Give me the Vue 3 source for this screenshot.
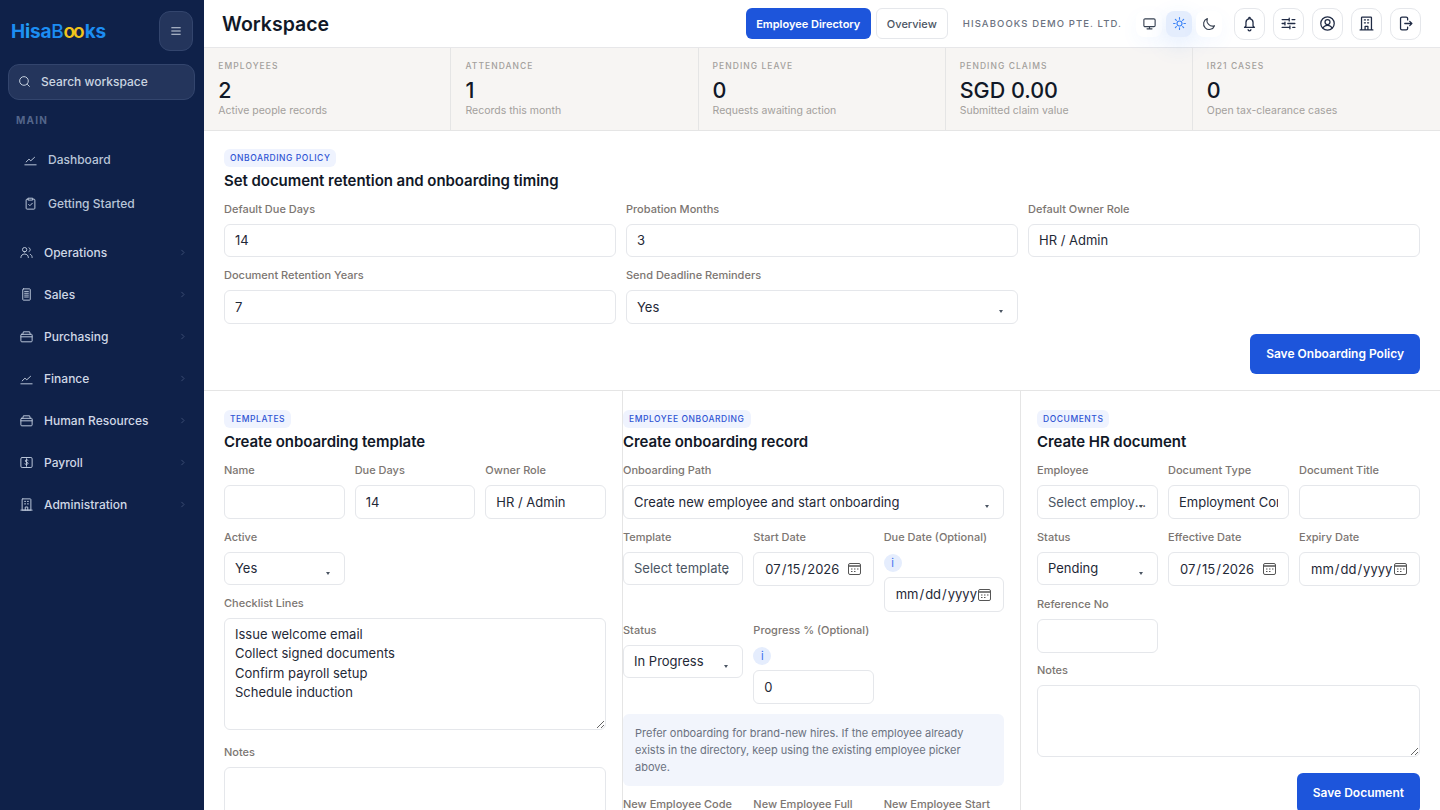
<template>
  <div class="app">
    <aside class="sidebar">
      <div class="brand">
        <span class="logo">H<span class="logo-i">i</span>sa<span class="logo-b">B</span><span class="logo-oo">oo</span>ks</span>
        <button class="menu-btn" aria-label="Menu">
          <svg viewBox="0 0 24 24" class="ico-menu"><path d="M4 6.5h16M4 12h16M4 17.5h16" /></svg>
        </button>
      </div>
      <div class="search">
        <svg viewBox="0 0 24 24" class="ico-search"><circle cx="11" cy="11" r="8" /><path d="m17 17 4.5 4.5" /></svg>
        <span>Search workspace</span>
      </div>
      <div class="nav-title">MAIN</div>
      <a v-for="item in mainLinks" :key="item.label" class="nav-sub">
        <svg viewBox="0 0 24 24" class="nav-ico"><path :d="icons[item.icon]" /></svg>
        <span>{{ item.label }}</span>
      </a>
      <nav class="nav-groups">
        <a v-for="item in groups" :key="item.label" class="nav-group">
          <svg viewBox="0 0 24 24" class="nav-ico"><path :d="icons[item.icon]" /></svg>
          <span class="nav-label">{{ item.label }}</span>
          <svg viewBox="0 0 24 24" class="chevron"><path d="m9 5 7 7-7 7" /></svg>
        </a>
      </nav>
    </aside>

    <main class="main">
      <header class="topbar">
        <h1>Workspace</h1>
        <div class="top-actions">
          <button class="btn-top primary">Employee Directory</button>
          <button class="btn-top">Overview</button>
          <span class="company">HISABOOKS DEMO PTE. LTD.</span>
          <div class="themes">
            <button v-for="t in themes" :key="t.icon" class="theme-btn" :class="{ active: t.active }">
              <svg viewBox="0 0 24 24"><path :d="icons[t.icon]" /></svg>
            </button>
          </div>
          <div class="tools">
            <button v-for="t in tools" :key="t" class="tool-btn">
              <svg viewBox="0 0 24 24"><path :d="icons[t]" /></svg>
            </button>
          </div>
        </div>
      </header>

      <section class="stats">
        <div v-for="s in stats" :key="s.label" class="stat">
          <div class="stat-label">{{ s.label }}</div>
          <div class="stat-value">{{ s.value }}</div>
          <div class="stat-sub">{{ s.sub }}</div>
        </div>
      </section>

      <section class="policy">
        <span class="tag">ONBOARDING POLICY</span>
        <h2>Set document retention and onboarding timing</h2>
        <div class="grid3">
          <label class="field"><span>Default Due Days</span><input value="14" /></label>
          <label class="field"><span>Probation Months</span><input value="3" /></label>
          <label class="field"><span>Default Owner Role</span><input value="HR / Admin" /></label>
          <label class="field"><span>Document Retention Years</span><input value="7" /></label>
          <label class="field">
            <span>Send Deadline Reminders</span>
            <div class="sel"><select><option>Yes</option></select></div>
          </label>
        </div>
        <div class="actions"><button class="btn-save wide">Save Onboarding Policy</button></div>
      </section>

      <section class="columns">
        <div class="col col-a">
          <span class="tag">TEMPLATES</span>
          <h2>Create onboarding template</h2>
          <div class="grid3">
            <label class="field"><span>Name</span><input /></label>
            <label class="field"><span>Due Days</span><input value="14" /></label>
            <label class="field"><span>Owner Role</span><input value="HR / Admin" /></label>
            <label class="field">
              <span>Active</span>
              <div class="sel"><select><option>Yes</option></select></div>
            </label>
          </div>
          <label class="field block">
            <span>Checklist Lines</span>
            <textarea class="ta-lines" :value="checklist"></textarea>
          </label>
          <label class="field block notes-a">
            <span>Notes</span>
            <textarea class="ta-notes"></textarea>
          </label>
        </div>

        <div class="col col-b">
          <span class="tag">EMPLOYEE ONBOARDING</span>
          <h2>Create onboarding record</h2>
          <label class="field block path">
            <span>Onboarding Path</span>
            <div class="sel"><select><option>Create new employee and start onboarding</option></select></div>
          </label>
          <div class="grid3">
            <label class="field">
              <span>Template</span>
              <div class="sel"><select class="muted"><option>Select template</option></select></div>
            </label>
            <label class="field"><span>Start Date</span><input type="date" value="2026-07-15" /></label>
            <label class="field">
              <span>Due Date (Optional)</span>
              <i class="hint">i</i>
              <input type="date" />
            </label>
            <label class="field">
              <span>Status</span>
              <div class="sel"><select><option>In Progress</option></select></div>
            </label>
            <label class="field">
              <span>Progress % (Optional)</span>
              <i class="hint">i</i>
              <input value="0" />
            </label>
          </div>
          <p class="notice">Prefer onboarding for brand-new hires. If the employee already exists in the directory, keep using the existing employee picker above.</p>
          <div class="grid3">
            <label class="field"><span>New Employee Code</span><input /></label>
            <label class="field"><span>New Employee Full Name</span><input /></label>
            <label class="field"><span>New Employee Start Date</span><input type="date" /></label>
          </div>
        </div>

        <div class="col col-c">
          <span class="tag">DOCUMENTS</span>
          <h2>Create HR document</h2>
          <div class="grid3">
            <label class="field">
              <span>Employee</span>
              <div class="sel"><select class="muted"><option>Select employee</option></select></div>
            </label>
            <label class="field"><span>Document Type</span><input value="Employment Contract" /></label>
            <label class="field"><span>Document Title</span><input /></label>
            <label class="field">
              <span>Status</span>
              <div class="sel"><select><option>Pending</option></select></div>
            </label>
            <label class="field"><span>Effective Date</span><input type="date" value="2026-07-15" /></label>
            <label class="field"><span>Expiry Date</span><input type="date" /></label>
            <label class="field"><span>Reference No</span><input /></label>
          </div>
          <label class="field block notes-c">
            <span>Notes</span>
            <textarea class="ta-doc"></textarea>
          </label>
          <div class="actions doc"><button class="btn-save">Save Document</button></div>
        </div>
      </section>
    </main>
  </div>
</template>

<script setup>
const icons = {
  chart: 'M3 20.5h18M5 16l4.5-4.5 3 2.5 6-5.5',
  clipboard: 'M8.5 5H6.5A1.5 1.5 0 0 0 5 6.5v13A1.5 1.5 0 0 0 6.5 21h11a1.5 1.5 0 0 0 1.5-1.5v-13A1.5 1.5 0 0 0 17.5 5h-2M8.5 3.5h7v3h-7zM9 13.5l2 2 4-4',
  people: 'M9 11a3.5 3.5 0 1 0 0-7 3.5 3.5 0 0 0 0 7zM3 20c0-3.5 2.5-5.5 6-5.5s6 2 6 5.5M16 4.5a3.3 3.3 0 0 1 2 3c0 1.4-.8 2.5-2 3M18 15c2 .6 3 2.4 3 5',
  doc: 'M7 3h10a1 1 0 0 1 1 1v16a1 1 0 0 1-1 1H7a1 1 0 0 1-1-1V4a1 1 0 0 1 1-1zM9 7h6M9 10h6M9 13h6M9 16h6',
  box: 'M4 8.5h16a1 1 0 0 1 1 1V19a1.5 1.5 0 0 1-1.5 1.5h-15A1.5 1.5 0 0 1 3 19V9.5a1 1 0 0 1 1-1zM6 8.5 7 4.5h10l1 4M3 12.5h18',
  payroll: 'M5 4h14a2 2 0 0 1 2 2v12a2 2 0 0 1-2 2H5a2 2 0 0 1-2-2V6a2 2 0 0 1 2-2zM14.5 8.5c-1-1.2-4.5-1.2-4.5 1 0 2.2 4.5 1.6 4.5 3.8 0 2-3.3 2.2-5 1M12 6v12',
  building: 'M6 3h12a1 1 0 0 1 1 1v17H5V4a1 1 0 0 1 1-1zM3 21h18M9 7h1.5M13.5 7H15M9 11h1.5M13.5 11H15M10 21v-5h4v5',
  monitor: 'M5 4.5h14A2 2 0 0 1 21 6.5V15a2 2 0 0 1-2 2H5a2 2 0 0 1-2-2V6.5a2 2 0 0 1 2-2zM8 20.5h8M12 17v3.5',
  sun: 'M12 8a4 4 0 1 0 0 8 4 4 0 0 0 0-8zM12 2.5V5M12 19v2.5M2.5 12H5M19 12h2.5M5.3 5.3 7 7M17 17l1.7 1.7M5.3 18.7 7 17M17 7l1.7-1.7',
  moon: 'M20 15.5A9 9 0 0 1 8.5 4 9 9 0 1 0 20 15.5z',
  bell: 'M12 3.5a1 1 0 0 1 1 1v1c2.5.5 4 2.5 4 5v5l2 2H5l2-2v-5c0-2.5 1.5-4.5 4-5v-1a1 1 0 0 1 1-1zM10 20.5a2 2 0 0 0 4 0',
  sliders: 'M3 6.5h10M17 6.5h4M13 4.5v4M3 12h4M11 12h10M7 10v4M3 17.5h11M18 17.5h3M14 15.5v4',
  user: 'M12 2.5a9.5 9.5 0 1 0 0 19 9.5 9.5 0 0 0 0-19zM12 6.5a3.5 3.5 0 1 0 0 7 3.5 3.5 0 0 0 0-7zM5.5 19c1-3 3.5-4.5 6.5-4.5s5.5 1.5 6.5 4.5',
  logout: 'M15 7V5a2 2 0 0 0-2-2H7a2 2 0 0 0-2 2v14a2 2 0 0 0 2 2h6a2 2 0 0 0 2-2v-2M11 12h10M18 9l3 3-3 3',
}

const mainLinks = [
  { label: 'Dashboard', icon: 'chart' },
  { label: 'Getting Started', icon: 'clipboard' },
]

const groups = [
  { label: 'Operations', icon: 'people' },
  { label: 'Sales', icon: 'doc' },
  { label: 'Purchasing', icon: 'box' },
  { label: 'Finance', icon: 'chart' },
  { label: 'Human Resources', icon: 'box' },
  { label: 'Payroll', icon: 'payroll' },
  { label: 'Administration', icon: 'building' },
]

const themes = [
  { icon: 'monitor' },
  { icon: 'sun', active: true },
  { icon: 'moon' },
]

const tools = ['bell', 'sliders', 'user', 'building', 'logout']

const stats = [
  { label: 'EMPLOYEES', value: '2', sub: 'Active people records' },
  { label: 'ATTENDANCE', value: '1', sub: 'Records this month' },
  { label: 'PENDING LEAVE', value: '0', sub: 'Requests awaiting action' },
  { label: 'PENDING CLAIMS', value: 'SGD 0.00', sub: 'Submitted claim value' },
  { label: 'IR21 CASES', value: '0', sub: 'Open tax-clearance cases' },
]

const checklist = 'Issue welcome email\nCollect signed documents\nConfirm payroll setup\nSchedule induction'
</script>

<style>
html,
body {
  margin: 0;
  height: 100%;
  overflow: hidden;
  background: #fff;
}
</style>

<style scoped>
.app {
  display: flex;
  height: 810px;
  overflow: hidden;
  font-family: Inter, 'Noto Sans', sans-serif;
  color: #111827;
}

button,
input,
select,
textarea {
  font-family: inherit;
}

/* sidebar */
.sidebar {
  width: 204px;
  flex: none;
  background: #0f2149;
  color: #cbd5e1;
}

.brand {
  display: flex;
  align-items: center;
  justify-content: space-between;
  padding: 11px 11px 13px 11px;
}

.logo {
  font-size: 19px;
  font-weight: 700;
  letter-spacing: -0.2px;
  color: #1c8df2;
}

.logo-i {
  color: #22a0f5;
}

.logo-b {
  font-weight: 500;
}

.logo-oo {
  color: #f2c41b;
  letter-spacing: -2px;
  margin-right: 2px;
  font-weight: 600;
}

.menu-btn {
  width: 34px;
  height: 40px;
  padding: 0;
  display: flex;
  align-items: center;
  justify-content: center;
  background: #24355c;
  border: 1px solid #33456d;
  border-radius: 11px;
}

.ico-menu {
  width: 14px;
  height: 14px;
  fill: none;
  stroke: #cbd5e1;
  stroke-width: 1.8;
}

.search {
  margin: 0 9px 0 8px;
  height: 36px;
  display: flex;
  align-items: center;
  gap: 10px;
  padding: 0 9px 1px;
  background: #24355c;
  border: 1px solid #33456d;
  border-radius: 11px;
  box-sizing: border-box;
  font-size: 12px;
  font-weight: 500;
  color: #cbd5e1;
}

.ico-search {
  width: 13px;
  height: 13px;
  fill: none;
  stroke: #cbd5e1;
  stroke-width: 1.8;
}

.nav-title {
  margin: 14px 0 19.5px 16px;
  font-size: 10px;
  line-height: 13px;
  font-weight: 700;
  letter-spacing: 1.2px;
  color: #54668b;
}

.nav-sub {
  display: flex;
  align-items: center;
  gap: 10px;
  height: 44px;
  padding-left: 23px;
  font-size: 12px;
  font-weight: 500;
  color: #b9c5d8;
}

.nav-sub:first-of-type {
  margin-top: -9px;
}

.nav-ico {
  width: 15px;
  height: 15px;
  flex: none;
  fill: none;
  stroke: #b9c5d8;
  stroke-width: 1.6;
  stroke-linecap: round;
  stroke-linejoin: round;
}

.nav-groups {
  margin-top: 6px;
}

.nav-group {
  display: flex;
  align-items: center;
  gap: 10px;
  height: 42px;
  padding-left: 19px;
  padding-right: 17px;
  font-size: 12px;
  font-weight: 500;
  color: #cfd8e6;
}

.nav-label {
  flex: 1;
}

.chevron {
  width: 9px;
  height: 9px;
  fill: none;
  stroke: #44557a;
  stroke-width: 2.2;
}

/* top bar */
.main {
  flex: 1;
  min-width: 0;
  background: #fff;
}

.topbar {
  height: 47px;
  box-sizing: content-box;
  border-bottom: 1px solid #e7e7e9;
  display: flex;
  align-items: center;
  justify-content: space-between;
  padding: 0 19px 0 18px;
}

h1 {
  margin: 0;
  font-size: 19.5px;
  font-weight: 600;
  color: #111827;
}

.top-actions {
  display: flex;
  align-items: center;
}

.btn-top {
  height: 31px;
  padding: 0 10px;
  margin-right: 5px;
  font-size: 11px;
  font-weight: 500;
  color: #4b5563;
  background: #fff;
  border: 1px solid #e5e7eb;
  border-radius: 6px;
}

.btn-top.primary {
  padding: 0 10.5px;
  background: #1d55db;
  border: none;
  color: #fff;
  font-weight: 600;
}

.company {
  margin-left: 10px;
  font-size: 9.5px;
  font-weight: 500;
  letter-spacing: 1.1px;
  color: #6b7280;
  white-space: nowrap;
}

.themes {
  display: flex;
  gap: 4px;
  margin-left: 14px;
}

.theme-btn {
  width: 26px;
  height: 26px;
  padding: 0;
  display: flex;
  align-items: center;
  justify-content: center;
  background: #fff;
  border: none;
  border-radius: 8px;
  box-shadow: 0 6px 18px rgba(59, 130, 246, 0.05);
}

.theme-btn svg {
  width: 15px;
  height: 15px;
  fill: none;
  stroke: #374151;
  stroke-width: 1.8;
  stroke-linecap: round;
  stroke-linejoin: round;
}

.theme-btn.active {
  background: #e4edfd;
  box-shadow: 0 8px 22px rgba(59, 130, 246, 0.16);
}

.theme-btn.active svg {
  stroke: #3b82f6;
}

.tools {
  display: flex;
  gap: 8px;
  margin-left: 12px;
}

.tool-btn {
  width: 31px;
  height: 32px;
  padding: 0;
  display: flex;
  align-items: center;
  justify-content: center;
  background: #fff;
  border: 1px solid #e5e7eb;
  border-radius: 10px;
}

.tool-btn svg {
  width: 17px;
  height: 17px;
  fill: none;
  stroke: #1f2a44;
  stroke-width: 1.8;
  stroke-linecap: round;
  stroke-linejoin: round;
}

/* stats */
.stats {
  display: grid;
  grid-template-columns: repeat(5, 1fr);
  height: 82px;
  padding-left: 0.3px;
  background: #f7f5f3;
  border-bottom: 1px solid #e5e5e5;
}

.stat {
  position: relative;
  padding: 12px 14px 0 14px;
  border-right: 1px solid #e5e5e5;
}

.stat:last-child {
  border-right: none;
}

.stat-label {
  font-size: 8.5px;
  line-height: 12px;
  font-weight: 500;
  letter-spacing: 1.05px;
  color: #a3a09c;
}

.stat-value {
  font-size: 21.5px;
  line-height: 26px;
  margin-top: 5px;
  font-weight: 500;
  color: #111827;
}

.stat-sub {
  margin-top: 1px;
  font-size: 10.5px;
  line-height: 14px;
  color: #a3a09c;
}

/* shared form bits */
.tag {
  display: inline-block;
  height: 18px;
  line-height: 18px;
  padding: 0 6px;
  font-size: 8.5px;
  font-weight: 500;
  letter-spacing: 0.55px;
  color: #2f55d4;
  background: #eff3fe;
  border-radius: 6px;
  vertical-align: top;
}

h2 {
  margin: 2px 0 10.7px;
  font-size: 15px;
  line-height: 20px;
  font-weight: 600;
  letter-spacing: -0.05px;
  color: #111827;
}

.col h2 {
  margin-bottom: 11.5px;
}

.grid3 {
  display: grid;
  grid-template-columns: repeat(3, minmax(0, 1fr));
  gap: 11px 10px;
  align-items: start;
}

.field {
  display: block;
  min-width: 0;
}

.field > span {
  display: block;
  margin-bottom: 7px;
  font-size: 11px;
  line-height: 15px;
  font-weight: 500;
  color: #7c7672;
}

input,
select,
textarea {
  display: block;
  width: 100%;
  box-sizing: border-box;
  height: 33.5px;
  padding: 0 10px;
  font-size: 13px;
  color: #1f2937;
  background: #fff;
  border: 1px solid #e5e7eb;
  border-radius: 6px;
  outline: none;
}

input[type='date'] {
  height: 34.5px;
  padding: 0 12px 0 10px;
}

input[type='date']::-webkit-calendar-picker-indicator {
  width: 13px;
  height: 13px;
  padding: 0;
  margin: 0;
  background: url("data:image/svg+xml,%3Csvg xmlns='http://www.w3.org/2000/svg' viewBox='0 0 13 13' fill='none' stroke='%23555'%3E%3Crect x='.5' y='1.5' width='12' height='11' rx='1.5'/%3E%3Cpath d='M.5 4h12' stroke-width='1.5'/%3E%3Cpath d='M3 7h1.5M6 7h1.5M9 7h1.5M3 9.5h1.5M6 9.5h1.5'/%3E%3C/svg%3E") center / 13px 13px no-repeat;
}

select {
  appearance: none;
  text-overflow: ellipsis;
}

select.muted {
  color: #4b5563;
}

.sel {
  position: relative;
}

.sel::after {
  content: '';
  position: absolute;
  right: 15px;
  top: 20px;
  border: 2px solid transparent;
  border-top: 3px solid #4b5563;
  border-bottom: none;
}

.hint {
  display: flex;
  align-items: center;
  justify-content: center;
  width: 18px;
  height: 18px;
  margin: 9px 0 5.5px;
  border-radius: 50%;
  font-style: normal;
  font-size: 11px;
  color: #3b6ff0;
  background: #e5edfd;
}

textarea {
  height: auto;
  padding: 5.5px 10px;
  line-height: 19.5px;
  resize: vertical;
}

.block {
  margin-top: 11px;
}

.ta-lines {
  height: 112px;
}

.ta-notes {
  height: 90px;
}

.ta-doc {
  height: 72px;
}

.notes-a {
  margin-top: 15px;
}

.notes-c {
  margin-top: 10px;
}

.actions {
  display: flex;
  justify-content: flex-end;
  margin-top: 10px;
}

.btn-save {
  height: 40px;
  padding: 0 16px;
  font-size: 12px;
  font-weight: 600;
  color: #fff;
  background: #1d55db;
  border: none;
  border-radius: 6px;
}

/* sections */
.policy {
  padding: 18px 20px 16px;
  border-bottom: 1px solid #e5e5e5;
}

.columns {
  display: grid;
  grid-template-columns: 418px 398px 420px;
}

.col {
  padding-top: 19px;
  min-width: 0;
}

.col-a {
  padding-left: 20px;
  padding-right: 16px;
}

.col-b {
  padding-right: 16px;
  padding-left: 0;
  border-left: 1px solid #e5e5e5;
}

.col-c {
  padding-left: 16px;
  padding-right: 20px;
  border-left: 1px solid #e5e5e5;
}

.path {
  margin-top: 0;
  margin-bottom: 11px;
}

.notice {
  margin: 10.5px 0 11px;
  padding: 10.5px 12px;
  font-size: 11px;
  line-height: 17px;
  color: #6b7280;
  background: #f2f5fc;
  border-radius: 6px;
}

.doc {
  margin-top: 16px;
}
</style>
